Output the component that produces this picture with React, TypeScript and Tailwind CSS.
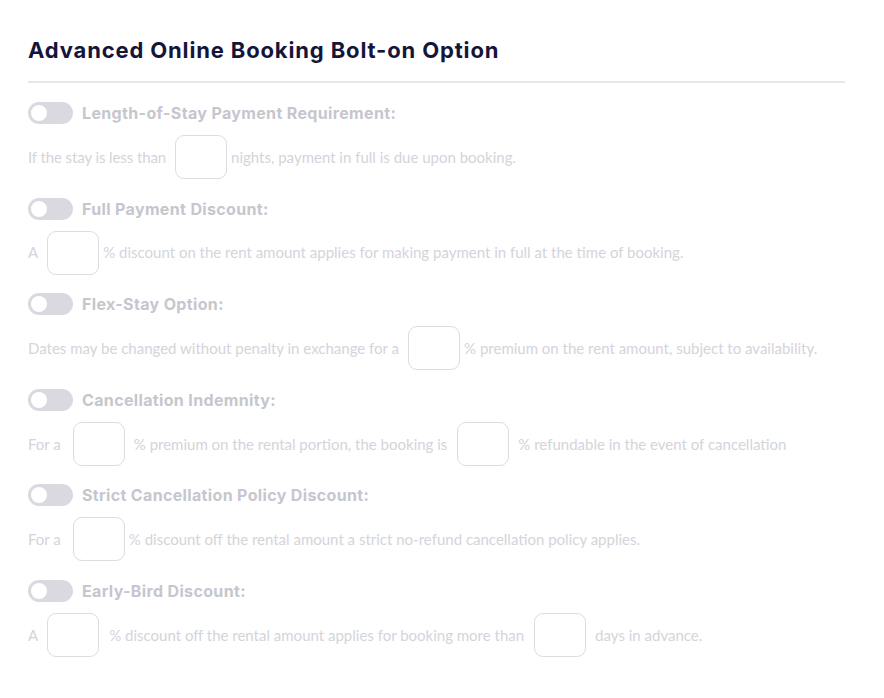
import React from "react";

const Toggle = () => (
  <div className="w-[45px] h-[22px] rounded-full bg-[#d9d9df] flex items-center px-[3px] shrink-0">
    <div className="w-[16px] h-[16px] rounded-full bg-white" />
  </div>
);

const Box = ({ cls }: { cls: string }) => (
  <div className={"w-[52px] h-[44px] rounded-[9px] border-[1.5px] border-[#dcdce3] bg-white shrink-0 " + cls} />
);

const Label = ({ children }: { children: React.ReactNode }) => (
  <div className="flex items-center gap-[9px] h-[22px]">
    <Toggle />
    <span className="font-['Inter'] font-bold text-[16px] text-[#c6c6ce] tracking-[0.35px]">{children}</span>
  </div>
);

const Row = ({ children }: { children: React.ReactNode }) => (
  <div className="flex items-center h-[44px] mt-[11px] font-['Lato'] text-[15px] text-[#d4d4db] whitespace-nowrap">
    {children}
  </div>
);

export default function App() {
  return (
    <div className="w-[884px] h-[698px] bg-white pl-[28px] pr-[39px] pt-[37px]">
      <h1 className="font-['Inter'] font-bold text-[22px] leading-[27px] tracking-[0.85px] text-[#15153a]">
        Advanced Online Booking Bolt-on Option
      </h1>
      <div className="h-[2px] bg-[#e6e6ec] mt-[17px] mb-[19px]" />
      <div className="flex flex-col gap-[18.6px]">
        <div>
          <Label>Length-of-Stay Payment Requirement:</Label>
          <Row>
            <span className="tracking-[-0.1px]">If the stay is less than</span>
            <Box cls="ml-[9px] mr-[4px]" />
            <span>nights, payment in full is due upon booking.</span>
          </Row>
        </div>
        <div>
          <Label>Full Payment Discount:</Label>
          <Row>
            <span>A</span>
            <Box cls="ml-[9px] mr-[4px]" />
            <span>% discount on the rent amount applies for making payment in full at the time of booking.</span>
          </Row>
        </div>
        <div>
          <Label>Flex-Stay Option:</Label>
          <Row>
            <span>Dates may be changed without penalty in exchange for a</span>
            <Box cls="ml-[9px] mr-[4px]" />
            <span>% premium on the rent amount, subject to availability.</span>
          </Row>
        </div>
        <div>
          <Label>Cancellation Indemnity:</Label>
          <Row>
            <span>For a</span>
            <Box cls="ml-[12px] mr-[9px]" />
            <span>% premium on the rental portion, the booking is</span>
            <Box cls="ml-[10px] mr-[9px]" />
            <span>% refundable in the event of cancellation</span>
          </Row>
        </div>
        <div>
          <Label>Strict Cancellation Policy Discount:</Label>
          <Row>
            <span>For a</span>
            <Box cls="ml-[12px] mr-[4px]" />
            <span>% discount off the rental amount a strict no-refund cancellation policy applies.</span>
          </Row>
        </div>
        <div>
          <Label>Early-Bird Discount:</Label>
          <Row>
            <span>A</span>
            <Box cls="ml-[9px] mr-[10px]" />
            <span>% discount off the rental amount applies for booking more than</span>
            <Box cls="ml-[10px] mr-[9px]" />
            <span>days in advance.</span>
          </Row>
        </div>
      </div>
    </div>
  );
}
